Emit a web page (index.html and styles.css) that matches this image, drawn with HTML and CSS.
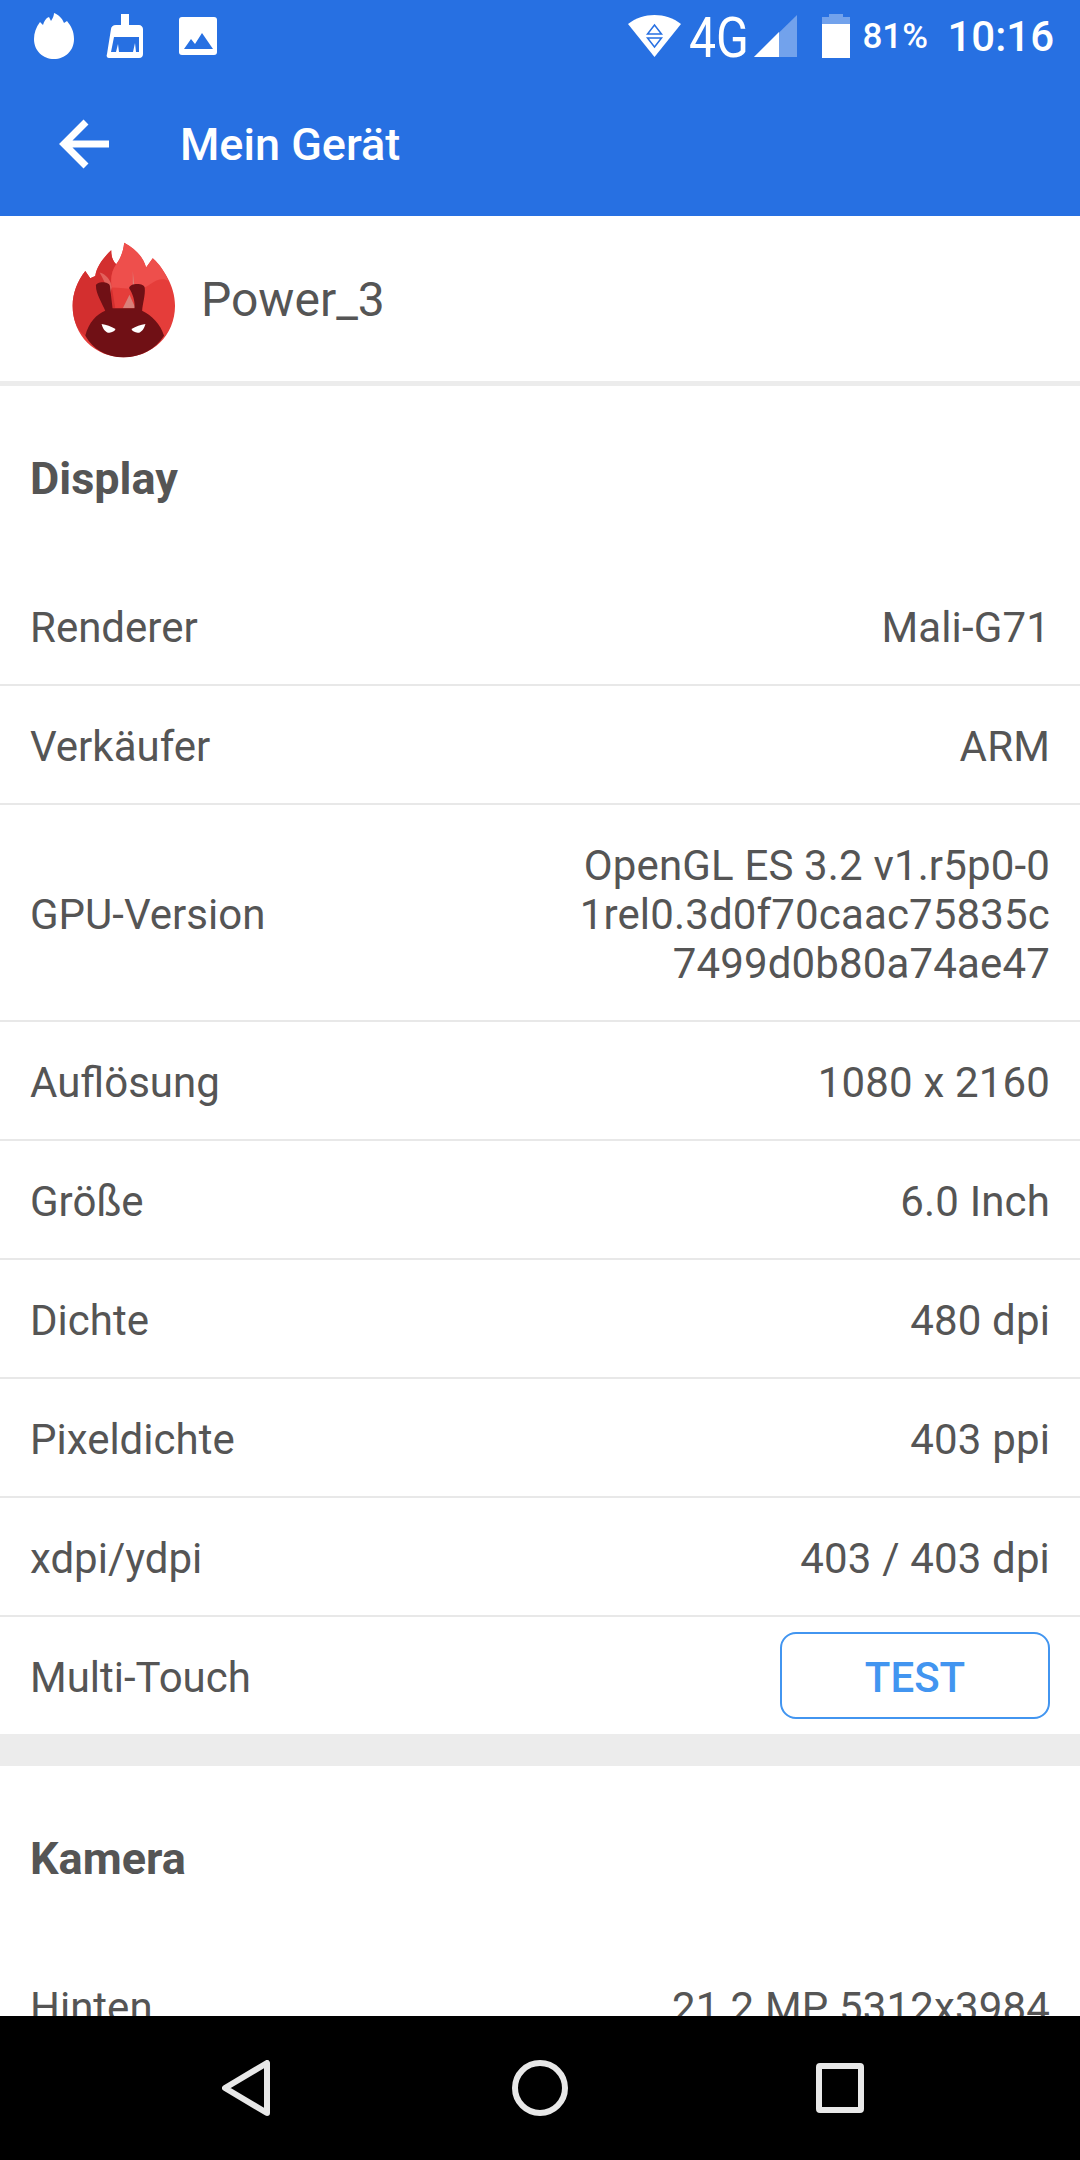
FILE: index.html
```html
<!DOCTYPE html>
<html>
<head>
	<title>Mein Gerät</title>
	<meta charset="UTF-8">
	<link rel="stylesheet" href="styles.css">
</head>
<body>
	<div class="top">
		<div class="status">
			<div class="status-left">
				<svg class="ic-flame" viewBox="0 0 40 46"><path fill="#fff" d="M20 46C9 46 0 38 0 26 0 20 2 14 6 9l3 3c1-4 3-7 6-8l2 4c2-3 3-6 3-8 5 2 8 5 10 10l3-2c4 5 7 10 7 18 0 12-9 20-20 20z"/></svg>
				<svg class="ic-broom" viewBox="0 0 38 44"><path fill="#fff" d="M15 0h8v11h10c2 0 4 2 4 4v25c0 2-1 4-4 4H3c-2 0-3-2-2-4l4-25c0-2 2-4 5-4h5z"/><path fill="#2770e2" d="M8 23h25v15h-3l-1-9-2 9H13l-1-8-2 8H5z"/></svg>
				<svg class="ic-image" viewBox="0 0 38 38"><rect width="38" height="38" rx="3" fill="#fff"/><path fill="#2770e2" d="M5 32l7-10 4 5 7-11 11 16z"/></svg>
			</div>
			<div class="status-right">
				<svg class="ic-wifi" viewBox="0 0 53 42"><path fill="#fff" d="M0 9C15-3 38-3 53 9L26.500 42z"/><path fill="none" stroke="#2770e2" stroke-width="1.500" d="M26.500 10l7 9h-14zM19.500 23h14l-7 9z"/></svg>
				<span class="net">4G</span>
				<svg class="ic-signal" viewBox="0 0 43 42"><path fill="#fff" opacity=".35" d="M43 0v42H0z"/><path fill="#fff" d="M25 17v25H0z"/></svg>
				<svg class="ic-battery" viewBox="0 0 28 44"><path fill="#fff" opacity=".35" d="M7 0h14v3h7v8H0V3h7z"/><rect y="10" width="28" height="34" fill="#fff"/></svg>
				<span class="percent">81%</span>
				<span class="clock">10:16</span>
			</div>
		</div>
		<div class="appbar">
			<svg class="ic-back" viewBox="0 0 50 50"><path fill="none" stroke="#fff" stroke-width="7" d="M50 25H5M27 3L5 25l22 22"/></svg>
			<span class="appbar-title">Mein Gerät</span>
		</div>
	</div>

	<div class="device">
		<svg class="logo" viewBox="90 60 320 355">
			<path fill="#e53d3a" d="M250 410C165 410 97 345 97 255c0-40 15-75 38-105l15 22 15-7c5-30 25-55 48-77 0 20 5 32 15 42 12-15 22-40 24-65 35 20 58 45 66 75l20-28c30 30 67 80 67 143 0 90-70 155-155 155z"/>
			<path fill="#d32f2f" d="M135 150l15 22 15-7c5-30 25-55 48-77 0 20 5 32 15 42-13 18-20 45-13 70l10 60-60 40-30 45C110 330 97 295 97 255c0-40 15-75 38-105z"/>
			<path fill="#ee4f4c" d="M228 130c12-15 22-40 24-65 38 20 58 45 66 75l20-28c22 18 37 43 47 68-15-10-35-5-55 10-30 25-70 10-115 10-5-30 0-50 13-70z"/>
			<path fill="#e2615c" d="M178 155c20 5 35 25 37 45l-8 30c-5-30-15-50-29-75z"/>
			<path fill="#d9807a" d="M278 150l5 50-5 12zM268 222l18 40h-38z"/>
			<path fill="#701015" d="M135 345c10-40 35-65 60-75-8-20-28-50-28-75 0-15 40-15 42 0l8 67h66c3-20-6-45-16-60 0-15 46-18 47 0 2 20-6 45-8 68 30 15 55 40 66 75-25 40-70 65-122 65s-92-25-115-65z"/>
			<path fill="#fff" d="M184 310c15 2 28 8 42 15-2 8-15 13-25 10-8-3-14-14-17-25zM316 310c-15 2-28 8-42 15 2 8 15 13 25 10 8-3 14-14 17-25z"/>
		</svg>
		<span class="device-name">Power_3</span>
	</div>

	<div class="content">
		<h2 class="section-title">Display</h2>
		<div class="row"><span>Renderer</span><span class="val">Mali-G71</span></div>
		<div class="row"><span>Verkäufer</span><span class="val">ARM</span></div>
		<div class="row row-tall"><span>GPU-Version</span><span class="val val-multi">OpenGL ES 3.2 v1.r5p0-0<br>1rel0.3d0f70caac75835c<br>7499d0b80a74ae47</span></div>
		<div class="row"><span>Auflösung</span><span class="val">1080 x 2160</span></div>
		<div class="row"><span>Größe</span><span class="val">6.0 Inch</span></div>
		<div class="row"><span>Dichte</span><span class="val">480 dpi</span></div>
		<div class="row"><span>Pixeldichte</span><span class="val">403 ppi</span></div>
		<div class="row"><span>xdpi/ydpi</span><span class="val">403 / 403 dpi</span></div>
		<div class="row row-last"><span>Multi-Touch</span><button class="btn">TEST</button></div>
		<div class="gap"></div>
		<h2 class="section-title">Kamera</h2>
		<div class="row"><span>Hinten</span><span class="val">21.2 MP 5312x3984</span></div>
	</div>

	<div class="nav">
		<svg class="nav-back" viewBox="0 0 48 56"><path fill="none" stroke="#e8e8e8" stroke-width="6" stroke-linejoin="round" d="M45 3v50L3 28z"/></svg>
		<svg class="nav-home" viewBox="0 0 56 56"><circle cx="28" cy="28" r="25" fill="none" stroke="#e8e8e8" stroke-width="6"/></svg>
		<svg class="nav-recent" viewBox="0 0 48 50"><rect x="3" y="3" width="42" height="44" rx="1" fill="none" stroke="#e8e8e8" stroke-width="6"/></svg>
	</div>
</body>
</html>
```

FILE: styles.css
```css
* {
	margin: 0;
	padding: 0;
	box-sizing: border-box;
}

html, body {
	width: 1080px;
	height: 2160px;
	overflow: hidden;
	background: white;
	font-family: Roboto, sans-serif;
	color: #555;
}

body {
	display: flex;
	flex-direction: column;
}

.top {
	height: 216px;
	flex: none;
	background: #2770e2;
	color: white;
}

.status {
	height: 72px;
	display: flex;
	justify-content: space-between;
	align-items: center;
	padding: 0 26px 0 34px;
}

.status-left,
.status-right {
	display: flex;
	align-items: center;
}

.ic-flame { width: 40px; height: 46px; margin-right: 32px; }
.ic-broom { width: 38px; height: 44px; margin-right: 35px; }
.ic-image { width: 38px; height: 38px; }
.ic-wifi { width: 53px; height: 42px; margin-right: 8px; }
.ic-signal { width: 43px; height: 42px; margin-left: 7px; margin-right: 25px; }
.ic-battery { width: 28px; height: 44px; margin-right: 12px; }

.net {
	font-size: 56px;
	font-weight: 400;
	width: 58px;
	padding-top: 4px;
	transform: scaleX(.86);
	transform-origin: left center;
}

.percent {
	font-size: 35px;
	font-weight: 500;
	width: 85px;
}

.clock {
	font-size: 42px;
	font-weight: 500;
}

.appbar {
	height: 144px;
	display: flex;
	align-items: center;
}

.ic-back {
	width: 50px;
	height: 50px;
	margin-left: 59px;
	margin-right: 71px;
}

.appbar-title {
	font-size: 45px;
	font-weight: 500;
}

.device {
	height: 170px;
	flex: none;
	display: flex;
	align-items: center;
	border-bottom: 5px solid #ececec;
}

.logo {
	width: 107px;
	height: 118px;
	margin-top: 2px;
	margin-left: 70px;
	margin-right: 24px;
}

.device-name {
	font-size: 48px;
	padding-top: 2px;
}

.content {
	flex: 1;
	overflow: hidden;
}

.section-title {
	height: 181px;
	line-height: 186px;
	padding-left: 30px;
	font-size: 45px;
	font-weight: 700;
}

.row {
	height: 119px;
	display: flex;
	justify-content: space-between;
	align-items: center;
	padding: 0 30px;
	font-size: 42px;
	border-bottom: 2px solid #e8e8e8;
}

.row > span {
	padding-top: 3px;
}

.row-tall {
	height: 217px;
}

.row-last {
	height: 117px;
	border-bottom: none;
}

.val {
	text-align: right;
	letter-spacing: .15px;
}

.val-multi {
	line-height: 49px;
}

.btn {
	width: 270px;
	height: 87px;
	padding-top: 4px;
	background: white;
	border: 2px solid #4295f0;
	border-radius: 16px;
	color: #4295f0;
	font-family: Roboto, sans-serif;
	font-size: 42px;
	font-weight: 500;
}

.gap {
	height: 32px;
	background: #ececec;
}

.nav {
	height: 144px;
	flex: none;
	background: black;
	display: flex;
	align-items: center;
}

.nav-back { width: 48px; height: 56px; margin-left: 222px; }
.nav-home { width: 56px; height: 56px; margin-left: 242px; }
.nav-recent { width: 48px; height: 50px; margin-left: 248px; }
```
